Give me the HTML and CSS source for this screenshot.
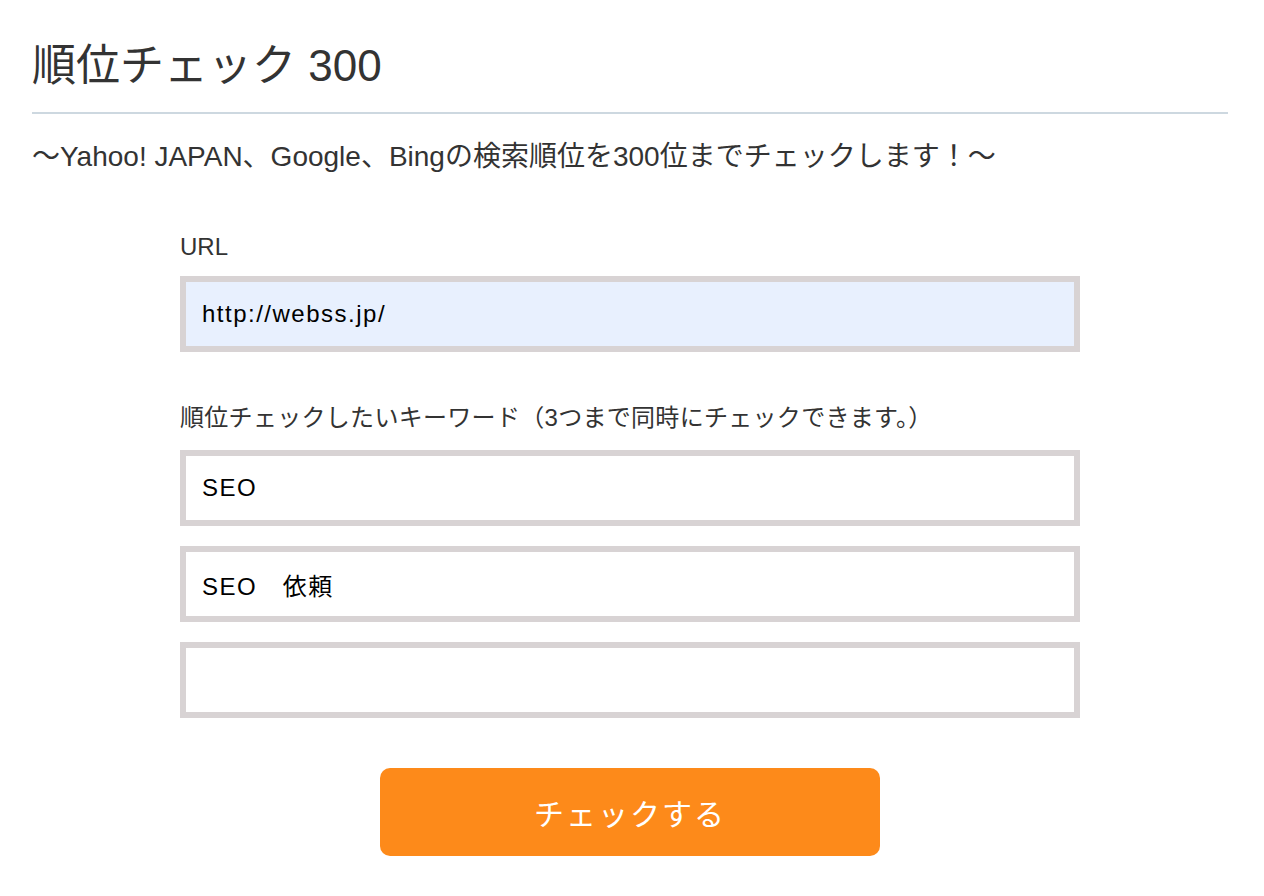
FILE: index.html
```html
<!DOCTYPE html>
<html lang="ja">
<head>
<meta charset="utf-8">
<title>順位チェック 300</title>
<link rel="stylesheet" href="styles.css">
</head>
<body>
<div class="page">
  <h1 class="title">順位チェック 300</h1>
  <p class="lead">〜Yahoo! JAPAN、Google、Bingの検索順位を300位までチェックします！〜</p>
  <form class="form">
    <label class="label label-url" for="url">URL</label>
    <input class="field field-filled" id="url" type="text" value="http://webss.jp/">
    <label class="label label-kw" for="kw1">順位チェックしたいキーワード（3つまで同時にチェックできます。）</label>
    <div class="fields">
      <input class="field" id="kw1" type="text" value="SEO">
      <input class="field" type="text" value="SEO　依頼">
      <input class="field" type="text" value="">
    </div>
    <div class="actions">
      <button class="submit" type="button">チェックする</button>
    </div>
  </form>
</div>
</body>
</html>
```

FILE: styles.css
```css
html, body {
  margin: 0;
  padding: 0;
  background: #ffffff;
}
body {
  font-family: "Liberation Sans", "Noto Sans CJK JP", sans-serif;
  color: #333333;
}
.page {
  width: 1196px;
  margin: 0 auto 0 32px;
  padding-top: 36px;
}
.title {
  margin: 0;
  font-size: 44px;
  font-weight: normal;
  line-height: 60px;
  padding-bottom: 16px;
  border-bottom: 2px solid #cdd8e0;
  color: #333333;
}
.lead {
  margin: 27px 0 0;
  font-size: 28px;
  line-height: 32px;
}
.form {
  width: 900px;
  margin: 0 auto;
  display: flex;
  flex-direction: column;
}
.label {
  display: block;
  font-size: 24px;
  line-height: 28px;
  color: #333333;
}
.label-url {
  margin-top: 60px;
  margin-bottom: 15px;
}
.label-kw {
  margin-top: 52px;
  margin-bottom: 18px;
  letter-spacing: 0.3px;
}
.fields {
  display: flex;
  flex-direction: column;
  gap: 20px;
}
.field {
  box-sizing: border-box;
  width: 900px;
  height: 76px;
  margin: 0;
  border: 6px solid #d8d3d4;
  border-radius: 0;
  padding: 0 16px;
  font-family: "Liberation Sans", "Noto Sans CJK JP", sans-serif;
  font-size: 24px;
  letter-spacing: 1.5px;
  color: #000000;
  background: #ffffff;
  outline: none;
}
.field-filled {
  background: #e8f0fe;
}
.actions {
  display: flex;
  justify-content: center;
  margin-top: 50px;
}
.submit {
  width: 500px;
  height: 88px;
  border: none;
  border-radius: 10px;
  background: #fd8a1a;
  color: #ffffff;
  font-family: "Liberation Sans", "Noto Sans CJK JP", sans-serif;
  font-size: 30px;
  letter-spacing: 2px;
  cursor: pointer;
}
```
